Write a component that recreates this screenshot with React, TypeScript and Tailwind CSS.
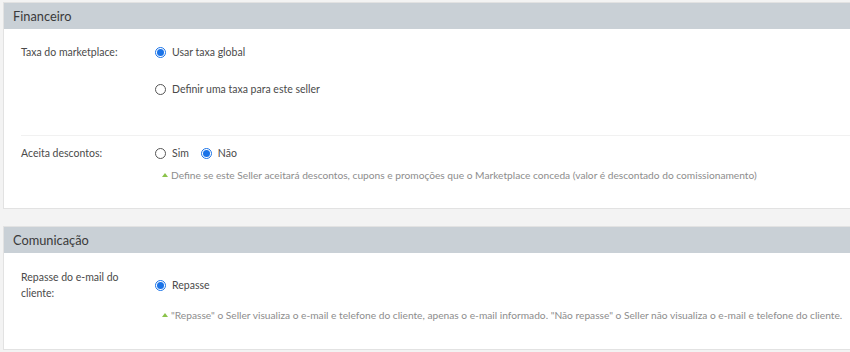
import React from "react";

// ==============================
// RADIO DOT
// ==============================
function Radio({ checked }: { checked?: boolean }) {
  if (checked) {
    return (
      <span className="w-[11px] h-[11px] rounded-full border border-[#1a73e8] bg-white flex items-center justify-center shrink-0">
        <span className="w-[7px] h-[7px] rounded-full bg-[#1a73e8]" />
      </span>
    );
  }
  return <span className="w-[11px] h-[11px] rounded-full border border-[#555] bg-white shrink-0" />;
}

function Option({ checked, label }: { checked?: boolean; label: string }) {
  return (
    <label className="flex items-center gap-[6px] h-4 text-[#4a4a4a]">
      <Radio checked={checked} />
      <span>{label}</span>
    </label>
  );
}

function Help({ children }: { children: React.ReactNode }) {
  return (
    <p className="flex items-center gap-[3px] h-4 ml-[7px] text-[10.2px] text-[#8d8d8d] whitespace-nowrap">
      <span className="w-0 h-0 border-l-[3px] border-r-[3px] border-b-[4px] border-l-transparent border-r-transparent border-b-[#8bc34a]" />
      <span>{children}</span>
    </p>
  );
}

function Panel({ title, children }: { title: string; children: React.ReactNode }) {
  return (
    <section className="w-[870px] bg-white border border-[#e2e2e2]">
      <header className="h-[26px] bg-[#c9d0d6] pl-[9px] flex items-center text-[12.8px] text-[#3a3a3a]">
        {title}
      </header>
      {children}
    </section>
  );
}

export default function App() {
  return (
    <div
      className="min-h-screen bg-[#f3f3f3] pl-[3px] pt-[2px] flex flex-col gap-[17px] text-[10.5px] leading-4 overflow-hidden"
      style={{ fontFamily: "Lato, 'Open Sans', sans-serif" }}
    >
      {/* FINANCEIRO */}
      <Panel title="Financeiro">
        <div className="px-[17px]">
          <div className="flex pt-[15px] pb-[38px] border-b border-[#f1f1f1]">
            <div className="w-[134px] text-[#4a4a4a]">Taxa do marketplace:</div>
            <div className="flex flex-col gap-[21px]">
              <Option checked label="Usar taxa global" />
              <Option label="Definir uma taxa para este seller" />
            </div>
          </div>
          <div className="flex pt-[9px] pb-[25px]">
            <div className="w-[134px] text-[#4a4a4a]">Aceita descontos:</div>
            <div className="flex flex-col gap-[6px]">
              <div className="flex gap-[12px]">
                <Option label="Sim" />
                <Option checked label="Não" />
              </div>
              <Help>
                Define se este Seller aceitará descontos, cupons e promoções que o Marketplace conceda (valor é
                descontado do comissionamento)
              </Help>
            </div>
          </div>
        </div>
      </Panel>

      {/* COMUNICAÇÃO */}
      <Panel title="Comunicação">
        <div className="px-[17px] pt-4 pb-[26px]">
          <div className="flex">
            <div className="w-[134px] text-[#4a4a4a]">
              Repasse do e-mail do
              <br />
              cliente:
            </div>
            <div className="flex flex-col">
              <div className="h-8 flex items-center">
                <Option checked label="Repasse" />
              </div>
              <div className="mt-[6px]">
                <Help>
                  "Repasse" o Seller visualiza o e-mail e telefone do cliente, apenas o e-mail informado. "Não
                  repasse" o Seller não visualiza o e-mail e telefone do cliente.
                </Help>
              </div>
            </div>
          </div>
        </div>
      </Panel>
    </div>
  );
}
